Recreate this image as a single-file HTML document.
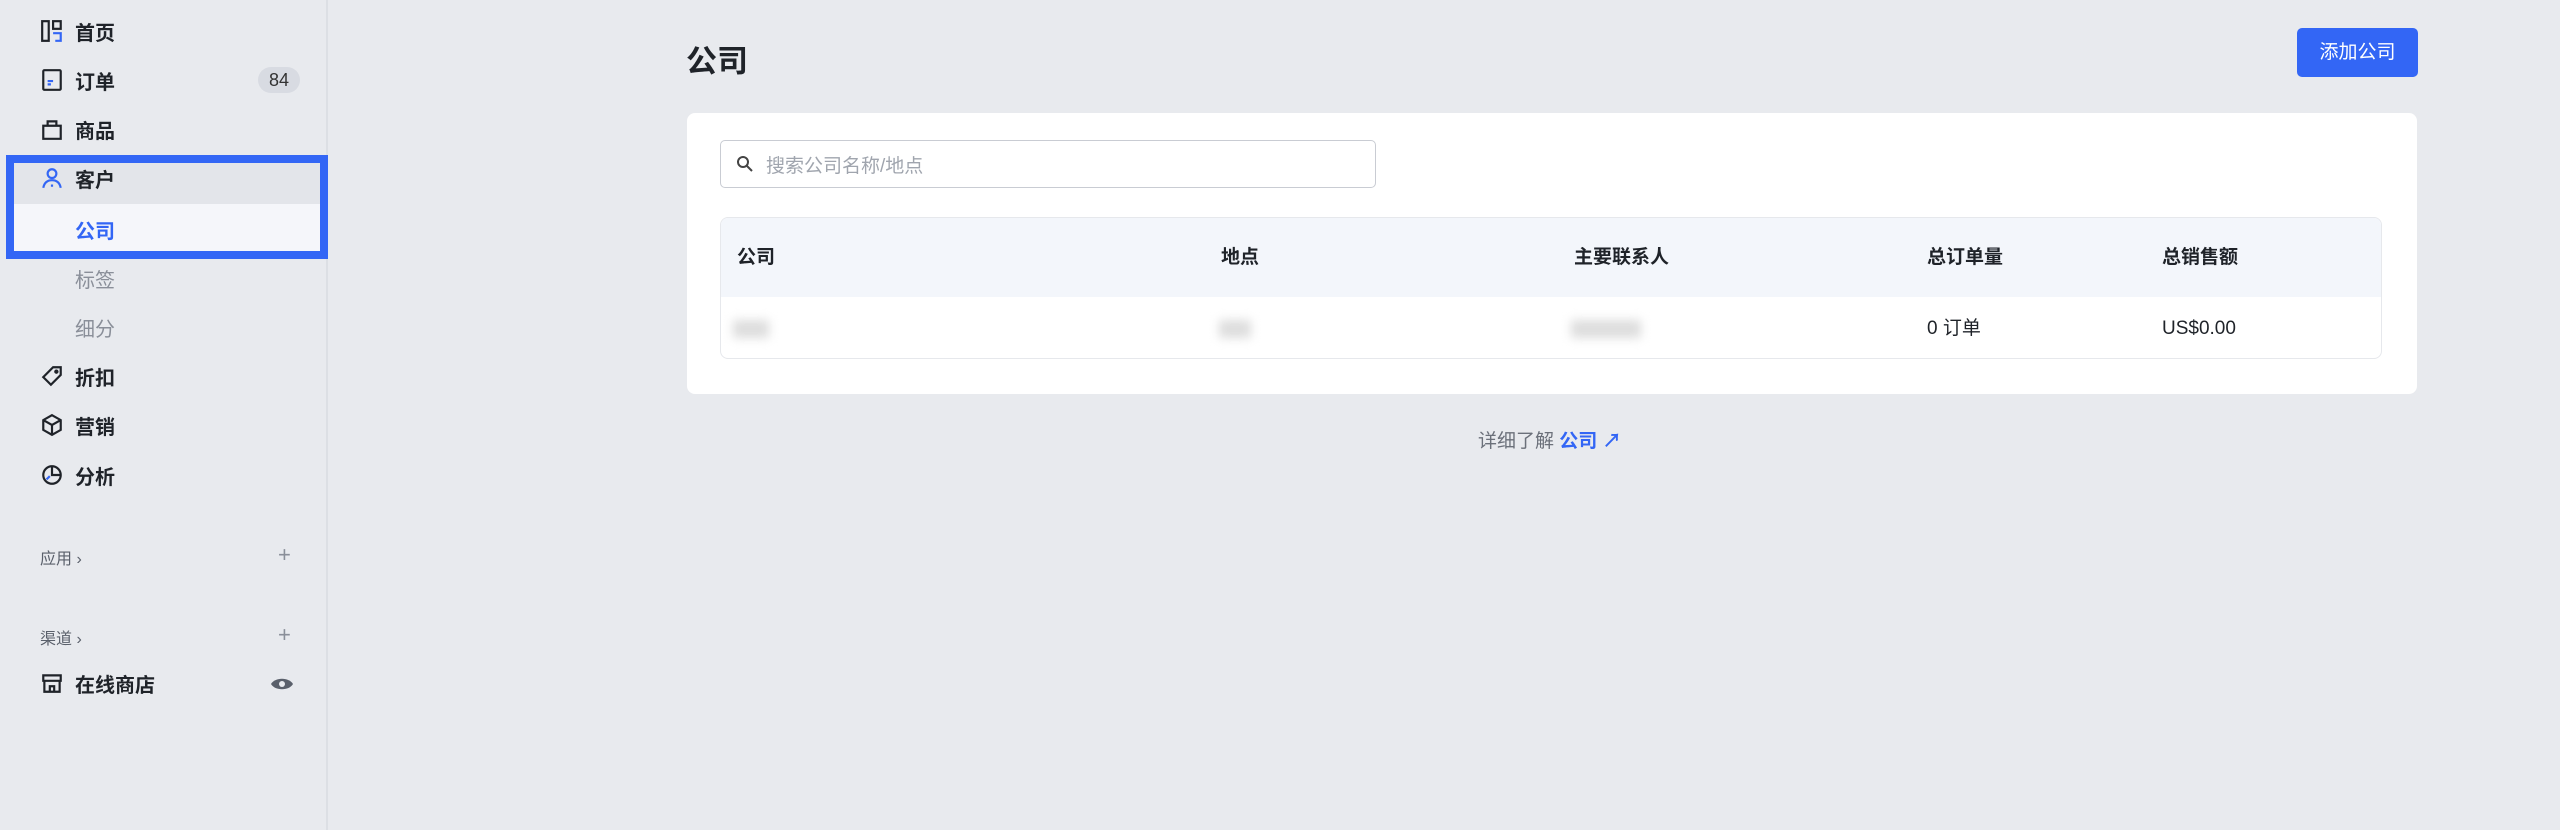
<!DOCTYPE html>
<html><head><meta charset="utf-8"><style>
*{box-sizing:border-box;margin:0;padding:0}
body{width:2560px;height:830px;background:#e8eaee;font-family:"Liberation Sans","Noto Sans CJK SC",sans-serif;position:relative;overflow:hidden;color:#1f2329}
.side{position:absolute;left:0;top:0;width:328px;height:830px;background:#e8eaee;border-right:2px solid #dcdfe4}
.it{position:absolute;left:40px;height:40px;display:flex;align-items:center;font-size:20px;font-weight:600;color:#1f2329}
.it svg{width:24px;height:24px;margin-right:11px}
.sub{position:absolute;left:75px;font-size:20px;color:#8a8f99}
.hl{position:absolute;left:6px;top:155px;width:322px;height:104px;border:8px solid #3366f5}
.hl .a{position:absolute;left:0;top:0;right:0;height:41px;background:#e3e5ea}
.hl .b{position:absolute;left:0;top:41px;right:0;bottom:0;background:#f5f6fa}
.badge{position:absolute;left:258px;top:67px;width:42px;height:26px;border-radius:13px;background:#d8dbe2;font-size:18px;color:#333;text-align:center;line-height:26px}
.sec{position:absolute;left:40px;font-size:16px;color:#5a606b}
.plus{position:absolute;left:278px;font-size:22px;color:#8a8f99}
.card{position:absolute;left:687px;top:113px;width:1730px;height:281px;background:#fff;border-radius:8px}
.search{position:absolute;left:33px;top:27px;width:656px;height:48px;border:1.5px solid #c9ccd3;border-radius:5px;font-size:19px;color:#a0a5ae;display:flex;align-items:center;padding-left:15px}
.tbl{position:absolute;left:33px;top:104px;width:1662px;height:142px;border:1px solid #e6e8ec;border-radius:8px;overflow:hidden}
.th{height:79px;background:#f3f6fb;position:relative;font-size:19px;font-weight:600}
.th span,.tr span{position:absolute;top:0;line-height:inherit;height:100%;display:flex;align-items:center}
.th{line-height:79px}.tr{line-height:63px}
.tr{height:63px;position:relative;font-size:19px}
.blur{display:inline-block;height:18px;background:#ddd;filter:blur(5px)}
.btn{position:absolute;left:2297px;top:28px;width:121px;height:49px;background:#3366f5;border-radius:5px;color:#fff;font-size:19px;text-align:center;line-height:49px}
</style></head><body>
<div class="side">
<div class="hl"><div class="a"></div><div class="b"></div></div>
<div class="it" style="top:11px"><svg viewBox="0 0 22 22" fill="none" stroke="#1f2329" stroke-width="2"><rect x="2" y="2" width="6" height="18"/><rect x="12" y="2" width="7" height="7"/><path d="M12 13h7v7h-5" stroke="#3366f5"/></svg>首页</div>
<div class="it" style="top:60px"><svg viewBox="0 0 22 22" fill="none" stroke="#1f2329" stroke-width="2"><rect x="3" y="2" width="16" height="18" rx="1"/><path d="M7 12h5M7 15h3" stroke="#3366f5"/></svg>订单</div>
<div class="badge">84</div>
<div class="it" style="top:109px"><svg viewBox="0 0 22 22" fill="none" stroke="#1f2329" stroke-width="2"><path d="M3 8h16v12H3zM7 8V4h8v4"/></svg>商品</div>
<div class="it" style="top:158px"><svg viewBox="0 0 22 22" fill="none" stroke="#3366f5" stroke-width="2"><circle cx="11" cy="7" r="4"/><path d="M3 20c1-5 4-7 8-7s7 2 8 7M11 17v2"/></svg>客户</div>
<div class="sub" style="top:215px;color:#3366f5;font-weight:600">公司</div>
<div class="sub" style="top:264px">标签</div>
<div class="sub" style="top:313px">细分</div>
<div class="it" style="top:356px"><svg viewBox="0 0 22 22" fill="none" stroke="#1f2329" stroke-width="2"><path d="M12 3h7v7L10 19 3 12z"/><circle cx="15" cy="7" r="1" fill="#3366f5"/></svg>折扣</div>
<div class="it" style="top:405px"><svg viewBox="0 0 22 22" fill="none" stroke="#1f2329" stroke-width="2"><path d="M11 2l8 4.5v9L11 20l-8-4.5v-9zM3 6.5l8 4.5 8-4.5M11 11v9"/></svg>营销</div>
<div class="it" style="top:455px"><svg viewBox="0 0 22 22" fill="none" stroke="#1f2329" stroke-width="2"><circle cx="11" cy="11" r="8"/><path d="M11 3v8h8" /><path d="M6 15l3-3" stroke="#3366f5"/></svg>分析</div>
<div class="sec" style="top:545px">应用 ›</div><div class="plus" style="top:542px">+</div>
<div class="sec" style="top:625px">渠道 ›</div><div class="plus" style="top:622px">+</div>
<div class="it" style="top:663px"><svg viewBox="0 0 22 22" fill="none" stroke="#1f2329" stroke-width="2"><path d="M3 4h16v5H3zM4 9v10h14V9M9 19v-5h4v5"/></svg>在线商店</div>
<svg style="position:absolute;left:270px;top:674px" width="24" height="20" viewBox="0 0 24 20"><path d="M1 10c4-7 18-7 22 0-4 7-18 7-22 0z" fill="#5a606b"/><circle cx="12" cy="10" r="3" fill="#e8eaee"/></svg>
</div>
<div style="position:absolute;left:686px;top:36px;font-size:31px;font-weight:600">公司</div>
<div class="btn">添加公司</div>
<div class="card">
<div class="search"><svg width="18" height="18" viewBox="0 0 18 18" fill="none" stroke="#444" stroke-width="2" style="margin-right:12px"><circle cx="7" cy="7" r="5"/><path d="M11 11l5 5"/></svg>搜索公司名称/地点</div>
<div class="tbl">
<div class="th"><span style="left:16px">公司</span><span style="left:500px">地点</span><span style="left:853px">主要联系人</span><span style="left:1206px">总订单量</span><span style="left:1441px">总销售额</span></div>
<div class="tr"><span style="left:12px"><i class="blur" style="width:36px"></i></span><span style="left:498px"><i class="blur" style="width:32px"></i></span><span style="left:850px"><i class="blur" style="width:70px"></i></span><span style="left:1206px">0 订单</span><span style="left:1441px">US$0.00</span></div>
</div></div>
<div style="position:absolute;left:1478px;top:426px;font-size:19px;color:#6b707a">详细了解 <span style="color:#3366f5;font-weight:600">公司 ↗</span></div>
</body></html>
